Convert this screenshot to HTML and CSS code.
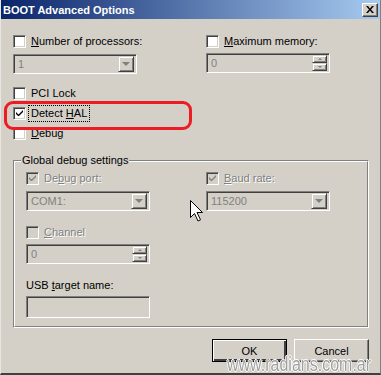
FILE: index.html
```html
<!DOCTYPE html>
<html lang="en">
<head>
    <meta charset="UTF-8">
    <title>BOOT Advanced Options</title>
    <link rel="stylesheet" href="styles.css">
</head>
<body>
    <div class="window">

        <div class="titlebar">
            <span class="title">BOOT Advanced Options</span>
            <span class="close">
                <svg width="8" height="7" viewBox="0 0 8 7"><path d="M0 0h2l2 2.5L6 0h2L5 3.5 8 7H6L4 4.5 2 7H0l3-3.5z" fill="#000"/></svg>
            </span>
        </div>

        <div class="content">

            <div class="top">
                <div class="field">
                    <div class="check-row">
                        <span class="cb"></span>
                        <span class="label"><u>N</u>umber of processors:</span>
                    </div>
                    <div class="combo disabled">
                        <span class="value">1</span>
                        <span class="drop"><i class="arrow"></i></span>
                    </div>
                </div>
                <div class="field">
                    <div class="check-row">
                        <span class="cb"></span>
                        <span class="label"><u>M</u>aximum memory:</span>
                    </div>
                    <div class="spin disabled">
                        <span class="value">0</span>
                        <span class="spin-btns">
                            <span class="sbtn"><i class="up"></i></span>
                            <span class="sbtn"><i class="down"></i></span>
                        </span>
                    </div>
                </div>
            </div>

            <div class="checks">
                <div class="check-row">
                    <span class="cb"></span>
                    <span class="label">PCI Lock</span>
                </div>
                <div class="check-row">
                    <span class="cb">
                        <svg width="9" height="9" viewBox="0 0 9 9"><path d="M1 3v2l2 2h1l4-4V1L3.5 5.5z" fill="#000"/></svg>
                    </span>
                    <span class="label focus">Detect <u>H</u>AL</span>
                </div>
                <div class="check-row">
                    <span class="cb"></span>
                    <span class="label"><u>D</u>ebug</span>
                </div>
            </div>

            <div class="group">
                <span class="group-title">Global debug settings</span>

                <div class="group-grid">
                    <div class="field">
                        <div class="check-row">
                            <span class="cb dis">
                                <svg width="9" height="9" viewBox="0 0 9 9"><path d="M1 3v2l2 2h1l4-4V1L3.5 5.5z" fill="#808080"/></svg>
                            </span>
                            <span class="label grey">De<u>b</u>ug port:</span>
                        </div>
                        <div class="combo disabled">
                            <span class="value">COM1:</span>
                            <span class="drop"><i class="arrow"></i></span>
                        </div>
                    </div>
                    <div class="field">
                        <div class="check-row">
                            <span class="cb dis">
                                <svg width="9" height="9" viewBox="0 0 9 9"><path d="M1 3v2l2 2h1l4-4V1L3.5 5.5z" fill="#808080"/></svg>
                            </span>
                            <span class="label grey"><u>B</u>aud rate:</span>
                        </div>
                        <div class="combo disabled">
                            <span class="value">115200</span>
                            <span class="drop"><i class="arrow"></i></span>
                        </div>
                    </div>
                </div>

                <div class="field channel">
                    <div class="check-row">
                        <span class="cb dis"></span>
                        <span class="label grey"><u>C</u>hannel</span>
                    </div>
                    <div class="spin disabled">
                        <span class="value">0</span>
                        <span class="spin-btns">
                            <span class="sbtn"><i class="up"></i></span>
                            <span class="sbtn"><i class="down"></i></span>
                        </span>
                    </div>
                </div>

                <div class="field usb">
                    <div class="label">USB <u>t</u>arget name:</div>
                    <div class="textbox disabled"></div>
                </div>
            </div>

            <div class="buttons">
                <button class="btn default">OK</button>
                <button class="btn">Cancel</button>
            </div>

        </div>

        <div class="highlight"></div>

        <svg class="cursor" width="14" height="22" viewBox="0 0 14 22">
            <path d="M0.5 0.5v17l4-4 3.5 7.5 2.5-1.2-3.5-7.3h5.5z" fill="#fff" stroke="#000" stroke-width="1"/>
        </svg>

        <div class="watermark">www.radians.com.ar</div>
    </div>
</body>
</html>
```

FILE: styles.css
```css
body {
    margin: 0;
    font-family: "Liberation Sans", Arial, sans-serif;
    font-size: 11px;
    color: #000;
}

.window {
    position: relative;
    width: 381px;
    height: 375px;
    box-sizing: border-box;
    background: #d4d0c8;
    border-left: 1px solid #e8e6e2;
    border-right: 1px solid #808080;
    border-bottom: 2px solid #404040;
    overflow: hidden;
}

.titlebar {
    height: 19px;
    display: flex;
    align-items: center;
    justify-content: space-between;
    padding: 0 2px 0 2px;
    background: linear-gradient(to right, #0a246a, #a6caf0);
}

.title {
    color: #fff;
    font-weight: bold;
    font-size: 11px;
}

.close {
    width: 16px;
    height: 14px;
    box-sizing: border-box;
    display: flex;
    align-items: center;
    justify-content: center;
    background: #d4d0c8;
    border: 1px solid;
    border-color: #fff #404040 #404040 #fff;
    box-shadow: inset -1px -1px #808080;
}

.content {
    padding: 16px 11px 0 12px;
}

.top {
    display: grid;
    grid-template-columns: 193px 1fr;
}

.check-row {
    display: flex;
    align-items: center;
    gap: 5px;
    height: 13px;
}

.cb {
    width: 13px;
    height: 13px;
    box-sizing: border-box;
    flex: none;
    display: flex;
    align-items: center;
    justify-content: center;
    background: #fff;
    border: 1px solid;
    border-color: #808080 #fff #fff #808080;
    box-shadow: inset 1px 1px #404040, inset -1px -1px #d4d0c8;
}

.cb.dis {
    background: #d4d0c8;
}

.label {
    line-height: 13px;
    white-space: nowrap;
}

.label.grey {
    color: #808080;
    text-shadow: 1px 1px #fff;
}

.label.focus {
    outline: 1px dotted #000;
    outline-offset: 1px;
    padding: 0 1px;
    margin-left: -1px;
}

.combo,
.spin,
.textbox {
    width: 124px;
    height: 20px;
    box-sizing: border-box;
    display: flex;
    align-items: center;
    border: 1px solid;
    border-color: #808080 #fff #fff #808080;
    box-shadow: inset 1px 1px #404040, inset -1px -1px #d4d0c8;
    background: #fff;
    padding: 2px;
}

.combo {
    margin-top: 6px;
}

.spin {
    margin-top: 5px;
}

.disabled {
    background: #d4d0c8;
}

.value {
    flex: 1;
    padding-left: 2px;
    color: #808080;
}

.drop {
    width: 16px;
    height: 16px;
    box-sizing: border-box;
    display: flex;
    align-items: center;
    justify-content: center;
    background: #d4d0c8;
    border: 1px solid;
    border-color: #d4d0c8 #404040 #404040 #d4d0c8;
    box-shadow: inset 1px 1px #fff, inset -1px -1px #808080;
}

.arrow {
    width: 0;
    height: 0;
    border-left: 4px solid transparent;
    border-right: 4px solid transparent;
    border-top: 4px solid #808080;
}

.spin-btns {
    display: flex;
    flex-direction: column;
    width: 15px;
    height: 16px;
}

.sbtn {
    flex: 1;
    display: flex;
    align-items: center;
    justify-content: center;
    background: #d4d0c8;
    border: 1px solid;
    border-color: #d4d0c8 #404040 #404040 #d4d0c8;
    box-shadow: inset 1px 1px #fff, inset -1px -1px #808080;
}

.up,
.down {
    width: 0;
    height: 0;
    border-left: 2px solid transparent;
    border-right: 2px solid transparent;
}

.up {
    border-bottom: 2px solid #808080;
}

.down {
    border-top: 2px solid #808080;
}

.checks {
    margin-top: 13px;
}

.checks .check-row {
    margin-bottom: 7px;
}

.group {
    position: relative;
    margin-top: 20px;
    width: 356px;
    height: 168px;
    box-sizing: border-box;
    border: 1px solid #808080;
    border-right-color: #fff;
    border-bottom-color: #fff;
    padding: 11px 0 0 12px;
}

.group::after {
    content: "";
    position: absolute;
    left: 0;
    top: 0;
    right: 0;
    bottom: 0;
    border: 1px solid #fff;
    border-right-color: #808080;
    border-bottom-color: #808080;
    pointer-events: none;
}

.group-title {
    position: absolute;
    left: 7px;
    top: -7px;
    padding: 0 1px;
    line-height: 13px;
    background: #d4d0c8;
    z-index: 1;
}

.group-grid {
    display: grid;
    grid-template-columns: 180px 1fr;
}

.channel {
    margin-top: 15px;
}

.usb {
    margin-top: 15px;
}

.textbox {
    margin-top: 4px;
    height: 22px;
}

.buttons {
    display: flex;
    justify-content: flex-end;
    gap: 7px;
    margin-top: 11px;
}

.btn {
    width: 75px;
    height: 23px;
    box-sizing: border-box;
    font-family: inherit;
    font-size: 11px;
    color: #000;
    background: #d4d0c8;
    border: 1px solid;
    border-color: #fff #404040 #404040 #fff;
    box-shadow: inset -1px -1px #808080;
    padding: 0;
}

.btn.default {
    border: 1px solid #000;
    box-shadow: inset 1px 1px #fff, inset -2px -2px #404040, inset -1px -1px #808080;
}

.highlight {
    position: absolute;
    left: 3px;
    top: 101px;
    width: 182px;
    height: 23px;
    border: 3px solid #ed1c24;
    border-radius: 9px;
}

.cursor {
    position: absolute;
    left: 189px;
    top: 200px;
}

.watermark {
    position: absolute;
    left: 226px;
    top: 356px;
    font-family: "Liberation Sans", Arial, sans-serif;
    font-size: 20px;
    line-height: 16px;
    white-space: nowrap;
    color: #a0a0a0;
    transform: scaleX(0.8);
    transform-origin: left top;
    text-shadow: 1px 0 #fff, -1px 0 #fff, 0 1px #fff, 0 -1px #fff;
}
```
